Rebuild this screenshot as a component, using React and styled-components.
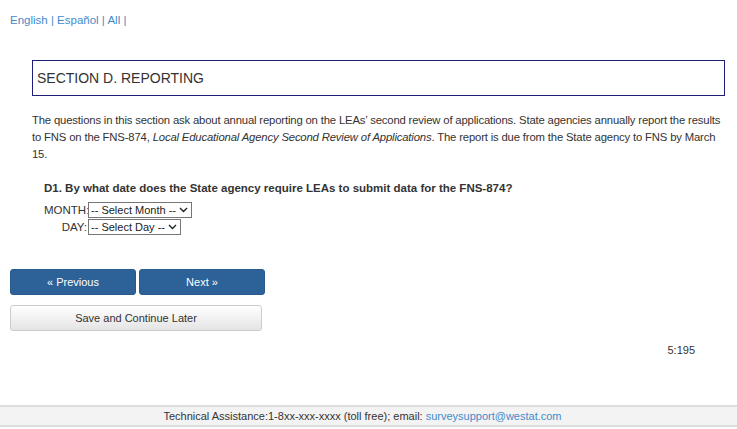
import React from "react";
import styled, { createGlobalStyle } from "styled-components";

const GlobalStyle = createGlobalStyle`
  html, body {
    margin: 0;
    padding: 0;
    background: #fff;
  }
  body {
    font-family: "Liberation Sans", Arial, sans-serif;
    font-size: 12px;
    color: #333;
  }
`;

const Page = styled.div`
  width: 737px;
  min-height: 429px;
  display: flex;
  flex-direction: column;
`;

const Main = styled.div`
  flex: 1;
  padding: 14px 10px 0 10px;
`;

const LangBar = styled.div`
  font-size: 11.5px;
  color: #428bca;
  a {
    color: #428bca;
    text-decoration: none;
  }
`;

const Content = styled.div`
  margin: 34px 2px 0 22px;
`;

const SectionBox = styled.div`
  border: 1px solid #1f1f7a;
  height: 34px;
  display: flex;
  align-items: center;
  padding-left: 4px;
  font-size: 14px;
  color: #333;
`;

const Intro = styled.p`
  margin: 16px 0 0 0;
  font-size: 11.3px;
  letter-spacing: -0.16px;
  line-height: 17px;
`;

const Question = styled.div`
  margin: 19px 0 0 12px;
`;

const QuestionTitle = styled.div`
  font-weight: bold;
  font-size: 11.5px;
  margin-bottom: 7px;
`;

const FieldRow = styled.div`
  display: flex;
  align-items: center;
  height: 17px;
`;

const FieldLabel = styled.span`
  width: 43px;
  margin-right: 1px;
  text-align: right;
  font-size: 11.5px;
`;

const SelectBox = styled.label`
  display: flex;
  align-items: center;
  box-sizing: border-box;
  width: ${(p) => p.$w}px;
  height: 16px;
  border: 1px solid #767676;
  background: #fff;
  svg {
    flex: none;
    margin: 0 3px 0 1px;
  }
`;

const Select = styled.select`
  appearance: none;
  -webkit-appearance: none;
  flex: 1;
  min-width: 0;
  font-family: "Liberation Sans", Arial, sans-serif;
  font-size: 11px;
  color: #222;
  height: 14px;
  line-height: 14px;
  padding: 0 0 0 2px;
  border: none;
  outline: none;
  background: transparent;
`;

const Chevron = () => (
  <svg width="9" height="6" viewBox="0 0 9 6">
    <path d="M1 1 L4.5 4.5 L8 1" fill="none" stroke="#222" strokeWidth="1.4" />
  </svg>
);

const NavRow = styled.div`
  display: flex;
  gap: 3px;
  margin-top: 34px;
`;

const NavButton = styled.button`
  width: 126px;
  height: 26px;
  background: #2d6299;
  border: 1px solid #285a8e;
  border-radius: 3px;
  color: #fff;
  font-family: "Liberation Sans", Arial, sans-serif;
  font-size: 11px;
  padding: 0;
`;

const SaveButton = styled.button`
  margin-top: 10px;
  width: 252px;
  height: 26px;
  background: linear-gradient(#fff, #e4e4e4);
  border: 1px solid #ccc;
  border-radius: 3px;
  color: #333;
  font-family: "Liberation Sans", Arial, sans-serif;
  font-size: 11px;
  padding: 0;
`;

const PageId = styled.div`
  text-align: right;
  padding-right: 32px;
  margin-top: 13px;
  font-size: 11px;
`;

const Footer = styled.div`
  margin-top: 34px;
  margin-bottom: 2px;
  border-top: 2px solid #dcdcdc;
  border-bottom: 2px solid #dcdcdc;
  background: #f3f3f3;
  height: 18px;
  display: flex;
  align-items: center;
  justify-content: center;
  padding-right: 12px;
  font-size: 11px;
  color: #333;
  a {
    color: #428bca;
    text-decoration: none;
    margin-left: 3px;
  }
`;

export default function App() {
  return (
    <Page>
      <GlobalStyle />
      <Main>
        <LangBar>
          <a href="#">English</a> | <a href="#">Español</a> | <a href="#">All</a> |
        </LangBar>
        <Content>
          <SectionBox>SECTION D. REPORTING</SectionBox>
          <Intro>
            The questions in this section ask about annual reporting on the LEAs’ second review of
            applications. State agencies annually report the results to FNS on the FNS-874,{" "}
            <em>Local Educational Agency Second Review of Applications</em>. The report is due from
            the State agency to FNS by March 15.
          </Intro>
          <Question>
            <QuestionTitle>
              D1. By what date does the State agency require LEAs to submit data for the FNS-874?
            </QuestionTitle>
            <FieldRow>
              <FieldLabel>MONTH:</FieldLabel>
              <SelectBox $w={104}>
                <Select defaultValue="">
                  <option value="">-- Select Month --</option>
                </Select>
                <Chevron />
              </SelectBox>
            </FieldRow>
            <FieldRow>
              <FieldLabel>DAY:</FieldLabel>
              <SelectBox $w={93}>
                <Select defaultValue="">
                  <option value="">-- Select Day --</option>
                </Select>
                <Chevron />
              </SelectBox>
            </FieldRow>
          </Question>
        </Content>
        <NavRow>
          <NavButton>« Previous</NavButton>
          <NavButton>Next »</NavButton>
        </NavRow>
        <SaveButton>Save and Continue Later</SaveButton>
        <PageId>5:195</PageId>
      </Main>
      <Footer>
        Technical Assistance:1-8xx-xxx-xxxx (toll free); email:
        <a href="#">surveysupport@westat.com</a>
      </Footer>
    </Page>
  );
}
